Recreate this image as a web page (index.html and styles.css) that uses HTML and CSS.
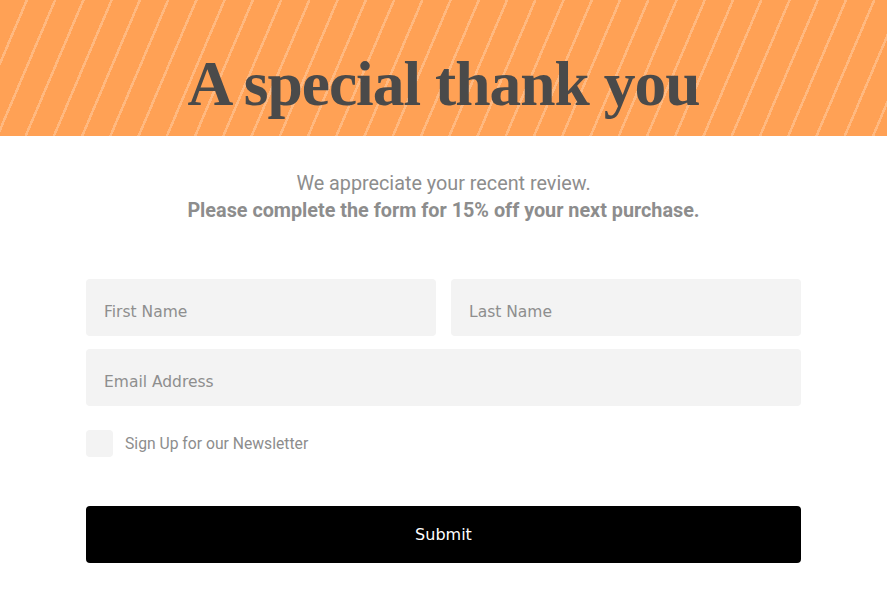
FILE: index.html
```html
<!DOCTYPE html>
<html lang="en">
<head>
  <meta charset="UTF-8">
  <meta name="viewport" content="width=device-width, initial-scale=1.0">
  <title>A special thank you</title>
  <link rel="stylesheet" href="styles.css">
</head>
<body>
  <header class="banner">
    <h1>A special thank you</h1>
  </header>

  <div class="container">
    <p class="intro">
      We appreciate your recent review.<br>
      <strong>Please complete the form for 15% off your next purchase.</strong>
    </p>

    <form class="form" onsubmit="return false;">
      <div class="row">
        <input type="text" placeholder="First Name">
        <input type="text" placeholder="Last Name">
      </div>
      <div class="row">
        <input type="email" placeholder="Email Address">
      </div>
      <label class="check">
        <input type="checkbox">
        <span class="box"></span>
        Sign Up for our Newsletter
      </label>
      <button type="submit">Submit</button>
    </form>
  </div>
</body>
</html>
```

FILE: styles.css
```css
body {
  margin: 0;
  background: #fff;
  font-family: 'Roboto', sans-serif;
}
.banner {
  height: 136px;
  background-color: #ffa155;
  background-image: repeating-linear-gradient(113deg, transparent 0 23.5px, rgba(255,255,255,0.25) 23.5px 26px);
  display: flex;
  align-items: center;
  justify-content: center;
}
.banner h1 {
  margin: 32px 0 0;
  font-family: 'Liberation Serif', serif;
  font-weight: bold;
  font-size: 63.5px;
  color: #4a4a4a;
  letter-spacing: -1px;
}
.container {
  max-width: 715px;
  margin: 0 auto;
}
.intro {
  margin: 34px 0 0;
  text-align: center;
  font-size: 19.8px;
  line-height: 27px;
  color: #8d8d8d;
}
.intro strong {
  font-weight: bold;
}
.form {
  margin-top: 55px;
  display: flex;
  flex-direction: column;
  gap: 13px;
}
.row {
  display: flex;
  gap: 15px;
}
.row input {
  flex: 1;
  min-width: 0;
  height: 57px;
  box-sizing: border-box;
  padding: 8px 18px 0;
  border: none;
  border-radius: 4px;
  background: #f3f3f3;
  font-family: 'DejaVu Sans', sans-serif;
  font-size: 15.5px;
  color: #555;
}
.row input::placeholder {
  color: #8e8e8e;
}
.check {
  display: flex;
  align-items: center;
  gap: 12px;
  margin-top: 11px;
  font-size: 15.7px;
  color: #8d8d8d;
}
.check input {
  display: none;
}
.check .box {
  width: 27px;
  height: 27px;
  border-radius: 4px;
  background: #f3f3f3;
}
button {
  margin-top: 36px;
  height: 57px;
  border: none;
  border-radius: 4px;
  background: #000;
  color: #fff;
  font-family: 'DejaVu Sans', sans-serif;
  font-size: 16px;
  cursor: pointer;
}
```
